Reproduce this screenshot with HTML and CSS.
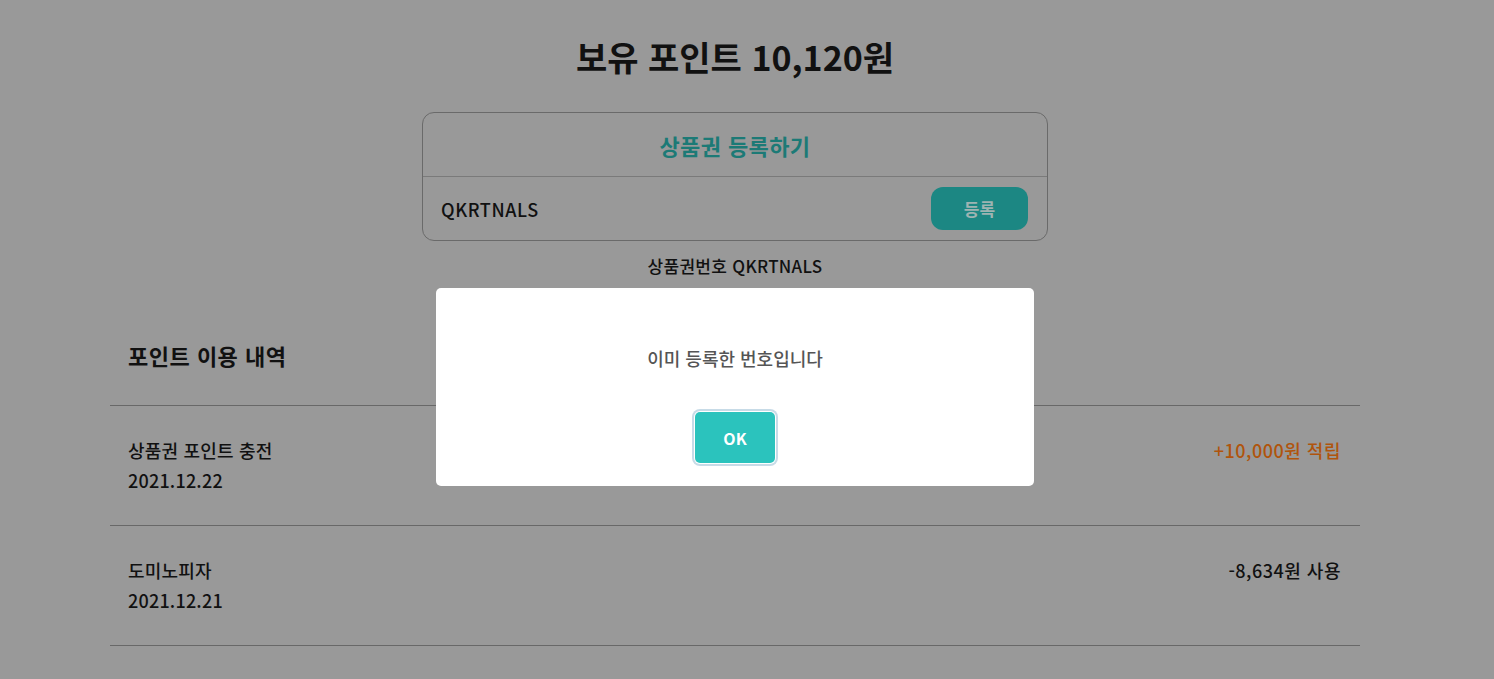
FILE: index.html
```html
<!DOCTYPE html>
<html lang="ko">
<head>
<meta charset="utf-8">
<title>포인트</title>
<link rel="stylesheet" href="styles.css">
</head>
<body>
<div class="page">
  <main class="container">
    <h1 class="title">보유 포인트 10,120원</h1>
    <section class="coupon">
      <div class="coupon-head">상품권 등록하기</div>
      <div class="coupon-row">
        <span class="coupon-code">QKRTNALS</span>
        <button class="coupon-btn">등록</button>
      </div>
    </section>
    <p class="coupon-number">상품권번호 QKRTNALS</p>

    <section class="history">
      <h2 class="history-title">포인트 이용 내역</h2>
      <div class="history-item">
        <div class="item-info">
          <div class="item-name">상품권 포인트 충전</div>
          <div class="item-date">2021.12.22</div>
        </div>
        <div class="item-amount plus">+10,000원 적립</div>
      </div>
      <div class="history-item">
        <div class="item-info">
          <div class="item-name">도미노피자</div>
          <div class="item-date">2021.12.21</div>
        </div>
        <div class="item-amount">-8,634원 사용</div>
      </div>
    </section>
  </main>

  <div class="overlay">
    <div class="modal">
      <p class="modal-text">이미 등록한 번호입니다</p>
      <button class="modal-ok">OK</button>
    </div>
  </div>
</div>
</body>
</html>
```

FILE: styles.css
```css
* { box-sizing: border-box; }

html, body {
  margin: 0;
  padding: 0;
  background: #999999;
  font-family: "Noto Sans CJK KR", "Noto Sans", sans-serif;
  color: #111;
}

.page {
  width: 1470px;
  min-height: 679px;
  position: relative;
}

.container {
  width: 1250px;
  margin: 0 auto;
  padding-top: 37px;
}

.title {
  margin: 0;
  text-align: center;
  font-size: 34px;
  line-height: 40px;
  font-weight: 700;
  color: #111;
}

.coupon {
  width: 626px;
  margin: 35px auto 0;
  border: 1px solid #6a6a6a;
  border-radius: 12px;
}

.coupon-head {
  height: 64px;
  display: flex;
  align-items: center;
  justify-content: center;
  font-size: 22px;
  font-weight: 700;
  letter-spacing: 0.4px;
  color: #1c7a76;
  border-bottom: 1px solid #7a7a7a;
}

.coupon-row {
  height: 63px;
  display: flex;
  align-items: center;
  justify-content: space-between;
  padding: 0 19px 0 18px;
}

.coupon-code {
  font-size: 18px;
  font-weight: 500;
  letter-spacing: 0.6px;
  color: #111;
}

.coupon-btn {
  width: 97px;
  height: 43px;
  border: none;
  border-radius: 12px;
  background: #1c8783;
  color: #9eb4b2;
  font-family: inherit;
  font-size: 17px;
  font-weight: 700;
}

.coupon-number {
  margin: 13px 0 0;
  text-align: center;
  font-size: 17px;
  line-height: 24px;
  font-weight: 500;
  letter-spacing: 0.3px;
  color: #111;
}

.history {
  margin-top: 62px;
}

.history-title {
  margin: 0;
  padding: 0 18px 35px;
  font-size: 22px;
  line-height: 30px;
  font-weight: 700;
  letter-spacing: 0.5px;
  color: #111;
  border-bottom: 1px solid #686868;
}

.history-item {
  display: flex;
  justify-content: space-between;
  align-items: flex-start;
  padding: 29px 19px 30px 18px;
  border-bottom: 1px solid #686868;
}

.item-name,
.item-date,
.item-amount {
  font-size: 18px;
  line-height: 30px;
  font-weight: 500;
  letter-spacing: 0.2px;
  color: #111;
}

.item-amount {
  letter-spacing: 0.5px;
}

.item-amount.plus {
  color: #b0540c;
}

.overlay {
  position: absolute;
  inset: 0;
  display: flex;
  justify-content: center;
  align-items: flex-start;
  padding-top: 288px;
}

.modal {
  width: 598px;
  height: 198px;
  background: #fff;
  border-radius: 5px;
  display: flex;
  flex-direction: column;
  align-items: center;
  padding-top: 57px;
}

.modal-text {
  margin: 0;
  font-size: 18px;
  line-height: 26px;
  font-weight: 500;
  color: #555;
}

.modal-ok {
  margin-top: 41px;
  width: 80px;
  height: 51px;
  border: none;
  border-radius: 5px;
  background: #2bc3bd;
  color: #fff;
  font-family: inherit;
  font-size: 16px;
  font-weight: 700;
  box-shadow: 0 0 0 1px #fff, 0 0 0 3px #c7dbe7;
}
```
